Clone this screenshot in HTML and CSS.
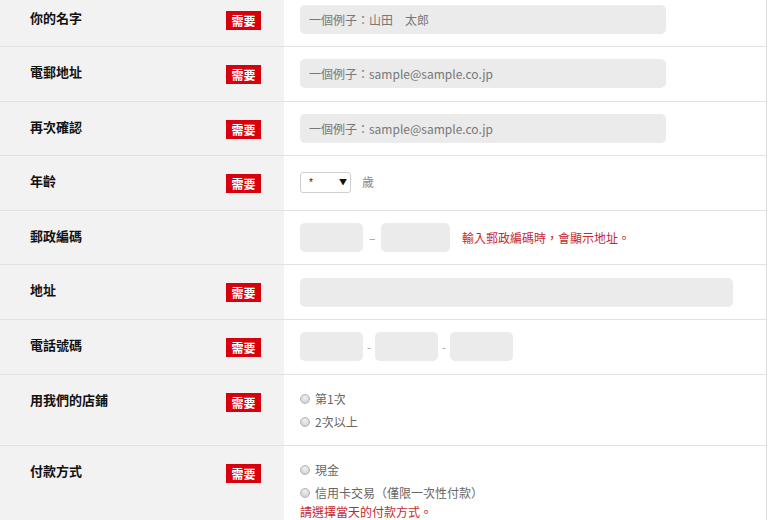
FILE: index.html
```html
<!DOCTYPE html>
<html lang="zh-Hant">
<head>
<meta charset="utf-8">
<title>Form</title>
<link rel="stylesheet" href="styles.css">
</head>
<body>
<div class="form">
  <div class="row">
    <div class="label"><span class="name">你的名字</span><span class="req">需要</span></div>
    <div class="field"><input class="text wide" placeholder="一個例子：山田　太郎"></div>
  </div>
  <div class="row">
    <div class="label"><span class="name">電郵地址</span><span class="req">需要</span></div>
    <div class="field"><input class="text wide" placeholder="一個例子：sample@sample.co.jp"></div>
  </div>
  <div class="row">
    <div class="label"><span class="name">再次確認</span><span class="req">需要</span></div>
    <div class="field"><input class="text wide" placeholder="一個例子：sample@sample.co.jp"></div>
  </div>
  <div class="row">
    <div class="label"><span class="name">年齡</span><span class="req">需要</span></div>
    <div class="field">
      <span class="select-wrap"><select class="select"><option>*</option></select></span>
      <span class="unit">歲</span>
    </div>
  </div>
  <div class="row">
    <div class="label"><span class="name">郵政編碼</span></div>
    <div class="field">
      <input class="text zip1">
      <span class="dash">–</span>
      <input class="text zip2">
      <span class="hint">輸入郵政編碼時，會顯示地址。</span>
    </div>
  </div>
  <div class="row">
    <div class="label"><span class="name">地址</span><span class="req">需要</span></div>
    <div class="field"><input class="text full"></div>
  </div>
  <div class="row">
    <div class="label"><span class="name">電話號碼</span><span class="req">需要</span></div>
    <div class="field">
      <input class="text tel">
      <span class="hyphen">-</span>
      <input class="text tel">
      <span class="hyphen">-</span>
      <input class="text tel">
    </div>
  </div>
  <div class="row">
    <div class="label"><span class="name">用我們的店鋪</span><span class="req">需要</span></div>
    <div class="field radios">
      <label class="radio"><span class="dot"></span>第1次</label>
      <label class="radio"><span class="dot"></span>2次以上</label>
    </div>
  </div>
  <div class="row">
    <div class="label"><span class="name">付款方式</span><span class="req">需要</span></div>
    <div class="field radios">
      <label class="radio"><span class="dot"></span>現金</label>
      <label class="radio"><span class="dot"></span>信用卡交易（僅限一次性付款）</label>
      <p class="error">請選擇當天的付款方式。</p>
    </div>
  </div>
</div>
</body>
</html>
```

FILE: styles.css
```css
* { box-sizing: border-box; }
html, body {
  margin: 0;
  padding: 0;
  background: #fff;
  overflow: hidden;
}
body {
  font-family: "Noto Sans CJK TC", "Liberation Sans", sans-serif;
  color: #222;
}
.form {
  width: 767px;
  margin-top: -7.5px;
  border-right: 1px solid #dcdcdc;
}
.row {
  display: grid;
  grid-template-columns: 284px 1fr;
  border-bottom: 1px solid #e2e2e2;
}
.label {
  background: #f2f2f2;
  display: flex;
  align-items: flex-start;
  justify-content: space-between;
  padding: 16px 23px 0 30px;
}
.name {
  font-size: 13px;
  font-weight: bold;
  line-height: 17px;
  color: #111;
}
.req {
  margin-top: 2px;
  width: 35px;
  height: 19px;
  background: #d9000d;
  color: #fff;
  font-size: 12px;
  font-weight: bold;
  line-height: 19px;
  text-align: center;
}
.field {
  display: flex;
  align-items: center;
  padding: 0 0 0 16px;
  height: 53.6px;
  line-height: 16px;
}
.text {
  height: 29px;
  border: none;
  border-radius: 5px;
  background: #ebebeb;
  font-family: inherit;
  font-size: 12px;
  color: #333;
  padding: 0 9px;
  outline: none;
}
.text::placeholder { color: #777; }
.wide { width: 366px; }
.full { width: 433px; }
.zip1 { width: 63px; }
.zip2 { width: 69px; }
.tel { width: 63px; }
.dash {
  color: #999;
  font-size: 12px;
  margin: 0 6px 0 6px;
  width: 6px;
}
.hint {
  margin-left: 12px;
  color: #c8282d;
  font-size: 12px;
}
.hyphen {
  color: #999;
  font-size: 11px;
  width: 12px;
  text-align: center;
}
.select-wrap {
  position: relative;
  display: inline-flex;
  margin-top: -2px;
}
.select-wrap::after {
  content: "▼";
  position: absolute;
  right: 4px;
  top: 5px;
  font-size: 8px;
  line-height: 10px;
  color: #111;
  pointer-events: none;
}
.select {
  appearance: none;
  -webkit-appearance: none;
  width: 51px;
  height: 21px;
  border: 1px solid #cfcfcf;
  border-radius: 3px;
  background: #fff;
  font-family: "Liberation Sans", sans-serif;
  font-size: 10px;
  color: #222;
  padding: 0 0 0 8px;
}
.unit {
  margin-left: 11px;
  color: #888;
  font-size: 12px;
  margin-top: -2px;
}
.radios {
  flex-direction: column;
  align-items: flex-start;
  justify-content: flex-start;
  height: auto;
  padding-top: 13px;
  padding-bottom: 11px;
}
.radio {
  display: flex;
  align-items: center;
  height: 23px;
  font-size: 12px;
  color: #666;
}
.dot {
  width: 10px;
  height: 10px;
  border-radius: 50%;
  border: 1px solid #b5b5b5;
  background: radial-gradient(circle at 50% 35%, #f0f0f0, #c9c9c9);
  margin-right: 5px;
}
.error {
  margin: 0;
  font-size: 12px;
  color: #c8282d;
  line-height: 14px;
}
```
